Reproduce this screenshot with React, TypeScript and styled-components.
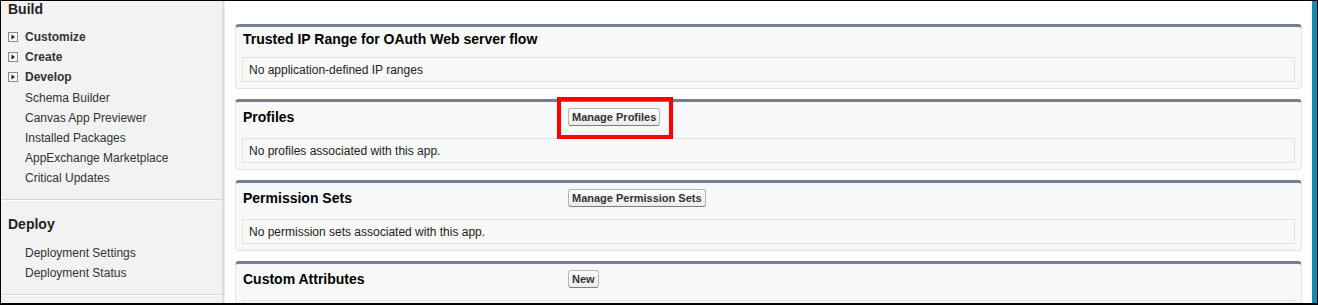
import React from "react";
import styled, { createGlobalStyle } from "styled-components";

const GlobalStyle = createGlobalStyle`
  html, body { margin: 0; padding: 0; background: #fff; overflow: hidden; }
  body { font-family: "Liberation Sans", Arial, sans-serif; }
`;

const Frame = styled.div`
  display: flex;
  width: 1318px;
  height: 305px;
  box-sizing: border-box;
  border: 1px solid #000;
  border-bottom-width: 2px;
  overflow: hidden;
`;

const Sidebar = styled.aside`
  flex: none;
  width: 221px;
  background: #f2f2f2;
  border-right: 2px solid #dcdcdc;
  display: flex;
  flex-direction: column;
`;

const Section = styled.div<{ $top: number; $bottom: number }>`
  padding: ${(p) => p.$top}px 0 ${(p) => p.$bottom}px 7px;
  border-bottom: 1px solid #d6d6d6;
  box-shadow: 0 1px 0 #fbfbfb;
`;

const SectionTitle = styled.div<{ $shift?: number }>`
  font-size: 14px;
  font-weight: bold;
  color: #222;
  line-height: 18px;
  margin-top: ${(p) => p.$shift ?? 0}px;
`;

const NavList = styled.ul<{ $gap: number }>`
  list-style: none;
  margin: ${(p) => p.$gap}px 0 0;
  padding: 0;
`;

const NavItem = styled.li<{ $parent?: boolean; $first?: boolean }>`
  box-sizing: border-box;
  display: flex;
  align-items: center;
  gap: 7px;
  height: 20px;
  padding-top: 2px;
  margin-top: ${(p) => (p.$first ? 1 : 0)}px;
  font-size: 12px;
  color: #333;
  font-weight: ${(p) => (p.$parent ? "bold" : "normal")};
  padding-left: ${(p) => (p.$parent ? 0 : 17)}px;
`;

const Main = styled.main`
  flex: 1;
  background: #fff;
  border-left: 1px solid #ececec;
  padding: 23px 10px 0;
  display: flex;
  flex-direction: column;
  gap: 10px;
`;

const Accent = styled.div`
  flex: none;
  width: 5px;
  background: #1689ad;
`;

const Card = styled.section`
  flex: none;
  background: #f8f8f8;
  border: 1px solid #e2e4e6;
  border-top: 3px solid #747e96;
  border-radius: 4px;
  padding: 0 6px 6px;
`;

const CardHeader = styled.div`
  display: flex;
  align-items: center;
  padding: 3px 0 9px 1px;
  min-height: 18px;
`;

const CardTitle = styled.h2`
  margin: 0;
  width: 325px;
  flex: none;
  font-size: 14px;
  font-weight: bold;
  line-height: 18px;
  color: #000;
`;

const ButtonWrap = styled.div`
  position: relative;
  margin: 3px 0;
  display: flex;
`;

const Button = styled.button`
  font-family: "Liberation Sans", Arial, sans-serif;
  font-size: 11px;
  font-weight: bold;
  color: #333;
  line-height: 12px;
  height: 18px;
  padding: 2px 3px;
  border: 1px solid #b5b5b5;
  border-bottom-color: #7f7f7f;
  border-radius: 3px;
  background: linear-gradient(#ffffff, #ececec);
  cursor: pointer;
`;

const Highlight = styled.div`
  position: absolute;
  left: -11px;
  top: -11px;
  width: 116px;
  height: 42px;
  box-sizing: border-box;
  border: 4px solid #f00;
  pointer-events: none;
`;

const InfoBox = styled.div`
  box-sizing: border-box;
  height: 25px;
  border: 1px solid #e0e3e5;
  background: #f8f8f8;
  padding: 0 6px;
  display: flex;
  align-items: center;
  font-size: 12px;
  color: #222;
`;

const ExpandIcon = () => (
  <svg width="10" height="10" viewBox="0 0 10 10" aria-hidden>
    <rect x="0.5" y="0.5" width="9" height="9" fill="#f7f7f7" stroke="#8c8c8c" />
    <polygon points="3.5,2.5 7,5 3.5,7.5" fill="#222" />
  </svg>
);

type CardData = {
  title: string;
  button?: string;
  highlight?: boolean;
  info: string;
};

const cards: CardData[] = [
  { title: "Trusted IP Range for OAuth Web server flow", info: "No application-defined IP ranges" },
  { title: "Profiles", button: "Manage Profiles", highlight: true, info: "No profiles associated with this app." },
  { title: "Permission Sets", button: "Manage Permission Sets", info: "No permission sets associated with this app." },
  { title: "Custom Attributes", button: "New", info: "" },
];

const buildParents = ["Customize", "Create", "Develop"];
const buildLinks = ["Schema Builder", "Canvas App Previewer", "Installed Packages", "AppExchange Marketplace", "Critical Updates"];

export default function App() {
  return (
    <>
      <GlobalStyle />
      <Frame>
        <Sidebar>
          <Section $top={0} $bottom={12}>
            <SectionTitle $shift={-1}>Build</SectionTitle>
            <NavList $gap={8}>
              {buildParents.map((t) => (
                <NavItem key={t} $parent>
                  <ExpandIcon />
                  {t}
                </NavItem>
              ))}
              {buildLinks.map((t, i) => (
                <NavItem key={t} $first={i === 0}>
                  {t}
                </NavItem>
              ))}
            </NavList>
          </Section>
          <Section $top={15} $bottom={12}>
            <SectionTitle>Deploy</SectionTitle>
            <NavList $gap={9}>
              <NavItem>Deployment Settings</NavItem>
              <NavItem>Deployment Status</NavItem>
            </NavList>
          </Section>
        </Sidebar>
        <Main>
          {cards.map((c) => (
            <Card key={c.title}>
              <CardHeader>
                <CardTitle>{c.title}</CardTitle>
                {c.button && (
                  <ButtonWrap>
                    <Button>{c.button}</Button>
                    {c.highlight && <Highlight />}
                  </ButtonWrap>
                )}
              </CardHeader>
              <InfoBox>{c.info}</InfoBox>
            </Card>
          ))}
        </Main>
        <Accent />
      </Frame>
    </>
  );
}
